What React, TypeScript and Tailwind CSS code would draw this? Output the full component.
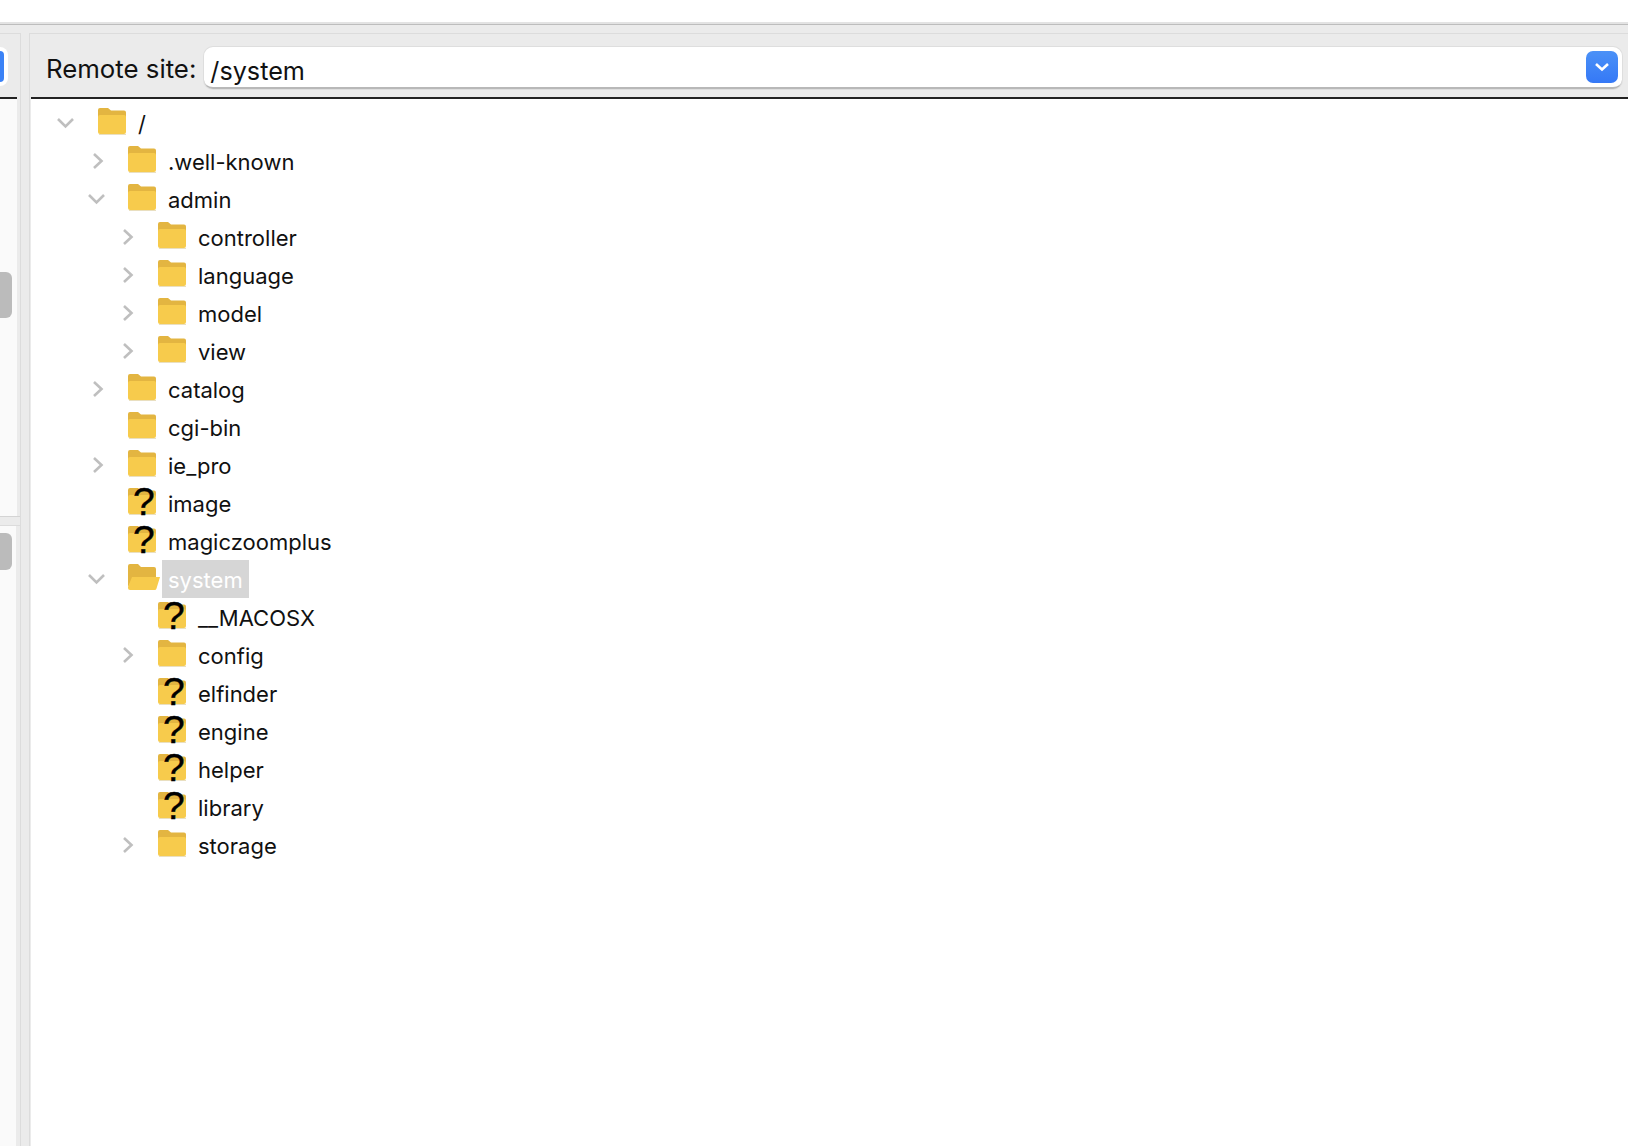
const font = "font-['Inter','Liberation_Sans',sans-serif]";

type Row = { name: string; depth: number; chevron?: "right" | "down"; kind?: "folder" | "unknown" | "open"; selected?: boolean };

const rows: Row[] = [
  { name: "/", depth: 0, chevron: "down" },
  { name: ".well-known", depth: 1, chevron: "right" },
  { name: "admin", depth: 1, chevron: "down" },
  { name: "controller", depth: 2, chevron: "right" },
  { name: "language", depth: 2, chevron: "right" },
  { name: "model", depth: 2, chevron: "right" },
  { name: "view", depth: 2, chevron: "right" },
  { name: "catalog", depth: 1, chevron: "right" },
  { name: "cgi-bin", depth: 1 },
  { name: "ie_pro", depth: 1, chevron: "right" },
  { name: "image", depth: 1, kind: "unknown" },
  { name: "magiczoomplus", depth: 1, kind: "unknown" },
  { name: "system", depth: 1, chevron: "down", kind: "open", selected: true },
  { name: "__MACOSX", depth: 2, kind: "unknown" },
  { name: "config", depth: 2, chevron: "right" },
  { name: "elfinder", depth: 2, kind: "unknown" },
  { name: "engine", depth: 2, kind: "unknown" },
  { name: "helper", depth: 2, kind: "unknown" },
  { name: "library", depth: 2, kind: "unknown" },
  { name: "storage", depth: 2, chevron: "right" },
];

function Chevron({ dir }: { dir?: "right" | "down" }) {
  return (
    <span className="flex h-[38px] w-[20px] shrink-0 items-center justify-center">
      {dir === "right" && (
        <svg width="12" height="18" viewBox="0 0 12 18" fill="none">
          <path d="M2 2l7.5 7L2 16" stroke="#bfbfbf" strokeWidth="2.6" />
        </svg>
      )}
      {dir === "down" && (
        <svg className="-translate-x-[1.5px]" width="18" height="12" viewBox="0 0 18 12" fill="none">
          <path d="M1.5 2l7.5 7.5L16.5 2" stroke="#bfbfbf" strokeWidth="2.6" />
        </svg>
      )}
    </span>
  );
}

function Folder({ kind = "folder" }: { kind?: Row["kind"] }) {
  return (
    <span className="relative h-[38px] w-[30px] shrink-0">
      <svg className="absolute left-0 top-[3px] overflow-visible" width="30" height="30" viewBox="0 0 30 30">
        {kind === "open" ? (
          <>
            <path d="M0 3a2 2 0 0 1 2-2h8l3 3h13a2 2 0 0 1 2 2v9H5L0 24z" fill="#e3b541" />
            <path d="M4 14h28l-3.5 11.5a2 2 0 0 1-2 1.5H2a2 2 0 0 1-2-2v-1z" fill="#f7cb4c" />
          </>
        ) : (
          <>
            <path d="M0 3a2 2 0 0 1 2-2h8l3 2.6h13a2 2 0 0 1 2 2V12H0z" fill="#e3b541" />
            <rect x="0" y="8" width="28" height="19" rx="2" fill="#f7cb4c" />
            <rect x="1" y="27" width="27" height="1" fill="#e9dfc0" />
          </>
        )}
      </svg>
      {kind === "unknown" && (
        <span className="absolute left-[5px] top-0 font-['Liberation_Sans',sans-serif] text-[39px] leading-[36px] font-normal text-black [-webkit-text-stroke:0.4px_black]">
          ?
        </span>
      )}
    </span>
  );
}

function TreeRow({ row }: { row: Row }) {
  return (
    <div
      className={`flex h-[38px] items-start ${
        row.depth === 0 ? "pl-[26px]" : row.depth === 1 ? "pl-[57px]" : "pl-[87px]"
      }`}
    >
      <Chevron dir={row.chevron} />
      <span className={`${row.depth === 0 ? "ml-[21px]" : "ml-[20px]"} flex items-start`}>
        <Folder kind={row.kind} />
      </span>
      <span
        className={`${font} ml-[4px] flex h-[38px] items-center px-[6px] pt-[2px] text-[22px] leading-none ${
          row.selected ? "bg-[#d6d6d6] text-white" : "text-[#111]"
        }`}
      >
        {row.name}
      </span>
    </div>
  );
}

export default function App() {
  return (
    <div className="flex h-[1146px] w-[1628px] flex-col overflow-hidden bg-white">
      <div className="h-[22px] shrink-0 bg-white" />
      <div className="h-[3px] shrink-0 border-b border-[#bdbdbd] bg-[#e3e3e3]" />
      <div className="flex min-h-0 flex-1 bg-[#ebebeb] pt-[8px]">
        {/* Left sliver of the local pane */}
        <div className="flex w-[21px] shrink-0 flex-col border-r border-[#dcdcdc]">
          <div className="flex h-[484px] flex-col border-b border-[#d4d4d4]">
            <div className="h-[64px] shrink-0 border-t border-[#dcdcdc]">
              <div className="mt-[17px] h-[31px] w-[4px] rounded-r-[4px] bg-[#3b82f6] shadow-[0_0_0_4px_#fff]" />
            </div>
            <div className="mr-[3px] h-[2px] shrink-0 bg-[#222]" />
            <div className="mr-[3px] flex-1 bg-[#fafafa] pt-[173px]">
              <div className="h-[46px] w-[12px] rounded-r-[6px] bg-[#bbbbbb]" />
            </div>
          </div>
          <div className="mt-[8px] flex-1 border-t border-[#dcdcdc]">
            <div className="mr-[4px] h-full bg-[#fafafa] pt-[7px]">
              <div className="h-[37px] w-[12px] rounded-r-[6px] bg-[#bbbbbb]" />
            </div>
          </div>
        </div>

        {/* Remote site pane */}
        <div className="ml-[8px] flex min-w-0 flex-1 flex-col border-l border-[#dcdcdc]">
          <div className="flex h-[64px] shrink-0 items-center border-t border-[#dcdcdc] pl-[16px] pr-[6px] pt-[4px]">
            <span className={`${font} mr-[8px] pt-[3px] text-[25.8px] leading-none whitespace-nowrap text-[#111]`}>Remote site:</span>
            <div className="flex h-[42px] flex-1 items-center justify-between rounded-[9px] border-b-[2px] border-[#b8b8b8] bg-white pl-[6px] pr-[4px] shadow-[0_0_0_1px_#dedede]">
              <span className={`${font} pt-[11px] text-[25.2px] leading-none text-[#111]`}>/system</span>
              <span className="flex h-[32px] w-[32px] items-center justify-center rounded-[7px] bg-gradient-to-b from-[#4b91f7] to-[#3578f6]">
                <svg width="16" height="12" viewBox="0 0 16 12" fill="none">
                  <path d="M2 3l6 5.5L14 3" stroke="#fff" strokeWidth="2.6" />
                </svg>
              </span>
            </div>
          </div>
          <div className="ml-[1px] h-[2px] shrink-0 bg-[#222]" />
          <div className="ml-[1px] flex-1 bg-white pt-[5px]">
            {rows.map((row) => (
              <TreeRow key={row.name} row={row} />
            ))}
          </div>
        </div>
      </div>
    </div>
  );
}
